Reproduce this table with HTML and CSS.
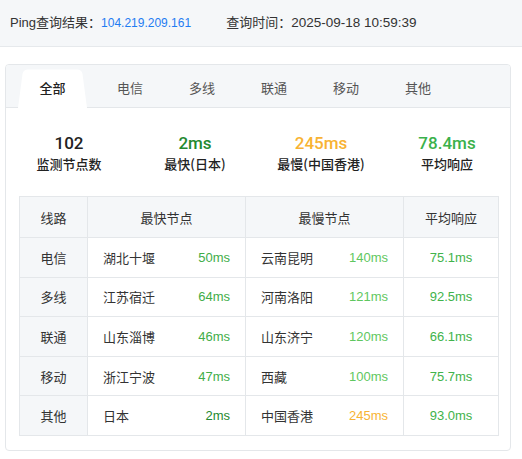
FILE: index.html
```html
<!DOCTYPE html>
<html lang="zh-CN">
<head>
<meta charset="utf-8">
<title>Ping查询结果</title>
<link rel="stylesheet" href="styles.css">
</head>
<body>
<div class="topbar">
  <span class="group">Ping查询结果：<span class="ip">104.219.209.161</span></span>
  <span class="group">查询时间：<span class="time">2025-09-18 10:59:39</span></span>
</div>
<div class="card">
  <div class="tabs">
    <div class="tab active">全部</div>
    <div class="tab">电信</div>
    <div class="tab">多线</div>
    <div class="tab">联通</div>
    <div class="tab">移动</div>
    <div class="tab">其他</div>
  </div>
  <div class="stats">
    <div class="stat"><div class="num">102</div><div class="label">监测节点数</div></div>
    <div class="stat"><div class="num c-dark">2ms</div><div class="label">最快(日本)</div></div>
    <div class="stat"><div class="num c-orange">245ms</div><div class="label">最慢(中国香港)</div></div>
    <div class="stat"><div class="num c-green">78.4ms</div><div class="label">平均响应</div></div>
  </div>
  <table class="grid">
    <colgroup><col class="w1"><col class="w2"><col class="w3"><col class="w4"></colgroup>
    <thead>
      <tr><th>线路</th><th>最快节点</th><th>最慢节点</th><th>平均响应</th></tr>
    </thead>
    <tbody>
      <tr><td class="line">电信</td><td><div class="cell"><span>湖北十堰</span><span class="c-mid">50ms</span></div></td><td><div class="cell"><span>云南昆明</span><span class="c-light">140ms</span></div></td><td class="avg">75.1ms</td></tr>
      <tr><td class="line">多线</td><td><div class="cell"><span>江苏宿迁</span><span class="c-mid">64ms</span></div></td><td><div class="cell"><span>河南洛阳</span><span class="c-light">121ms</span></div></td><td class="avg">92.5ms</td></tr>
      <tr><td class="line">联通</td><td><div class="cell"><span>山东淄博</span><span class="c-mid">46ms</span></div></td><td><div class="cell"><span>山东济宁</span><span class="c-light">120ms</span></div></td><td class="avg">66.1ms</td></tr>
      <tr><td class="line">移动</td><td><div class="cell"><span>浙江宁波</span><span class="c-mid">47ms</span></div></td><td><div class="cell"><span>西藏</span><span class="c-light">100ms</span></div></td><td class="avg">75.7ms</td></tr>
      <tr><td class="line">其他</td><td><div class="cell"><span>日本</span><span class="c-dark">2ms</span></div></td><td><div class="cell"><span>中国香港</span><span class="c-orange">245ms</span></div></td><td class="avg">93.0ms</td></tr>
    </tbody>
  </table>
</div>
</body>
</html>
```
FILE: styles.css
```css
* { box-sizing: border-box; }
html, body { margin: 0; background: #fff; }
body {
  font-family: "Liberation Sans", "Noto Sans CJK SC", sans-serif;
  font-size: 13px;
  color: #333;
}
.topbar {
  height: 47px;
  background: #f5f7f9;
  border-bottom: 1px solid #e6e9ec;
  display: flex;
  align-items: center;
  padding: 0 0 4px 10px;
  gap: 35px;
}
.ip { color: #1f7cf2; font-size: 12px; }
.time { font-size: 13.5px; }
.card {
  margin: 17px 11px 0 5px;
  border: 1px solid #e4e7ea;
  border-radius: 4px;
  overflow: hidden;
  padding-bottom: 14px;
}
.tabs {
  display: flex;
  height: 43px;
  padding: 4px 0 0 12px;
  background: #f5f7f9;
  border-bottom: 1px solid #e4e7ea;
}
.tab {
  position: relative;
  width: 72px;
  height: 39px;
  display: flex;
  align-items: center;
  justify-content: center;
  color: #555;
  padding-bottom: 2px;
}
.tab.active {
  width: 69px;
  margin-right: 7px;
  color: #222;
  font-weight: 500;
  z-index: 1;
}
.tab.active::before {
  content: "";
  position: absolute;
  left: 0; top: 0;
  width: 69px; height: 39px;
  background: #fff;
  z-index: -1;
  clip-path: path("M0,39 L4.5,5 Q5.2,0.5 10,0.5 L59,0.5 Q63.8,0.5 64.5,5 L69,39 Z");
}
.stats {
  display: grid;
  grid-template-columns: repeat(4, 1fr);
  padding: 24px 0 23px;
  text-align: center;
}
.num {
  font-family: Roboto, "Liberation Sans", sans-serif;
  font-weight: 500;
  font-size: 17px;
  line-height: 22px;
  color: #222;
}
.label {
  margin-top: 1px;
  font-family: "Noto Sans CJK SC", sans-serif;
  font-weight: 500;
  line-height: 18px;
  color: #222;
}
.c-dark { color: #23892f; }
.c-orange { color: #f8b333; }
.c-green { color: #3bb14b; }
.c-mid { color: #41ad48; }
.c-light { color: #5fc760; }
.grid {
  margin: 0 13px;
  width: 479px;
  border-collapse: collapse;
  table-layout: fixed;
}
.w1 { width: 68px; }
.w2 { width: 158px; }
.w3 { width: 158px; }
.w4 { width: 95px; }
.grid th, .grid td {
  border: 1px solid #e4e7ea;
  padding: 0 15px;
}
.grid th {
  height: 41px;
  background: #f5f7f9;
  font-weight: normal;
  color: #333;
  text-align: center;
}
.grid td { height: 39.6px; }
.grid td.line {
  background: #f5f7f9;
  text-align: center;
  padding: 0;
}
.cell {
  display: flex;
  justify-content: space-between;
  align-items: center;
}
.avg {
  text-align: center;
  color: #41b34b;
}
```
